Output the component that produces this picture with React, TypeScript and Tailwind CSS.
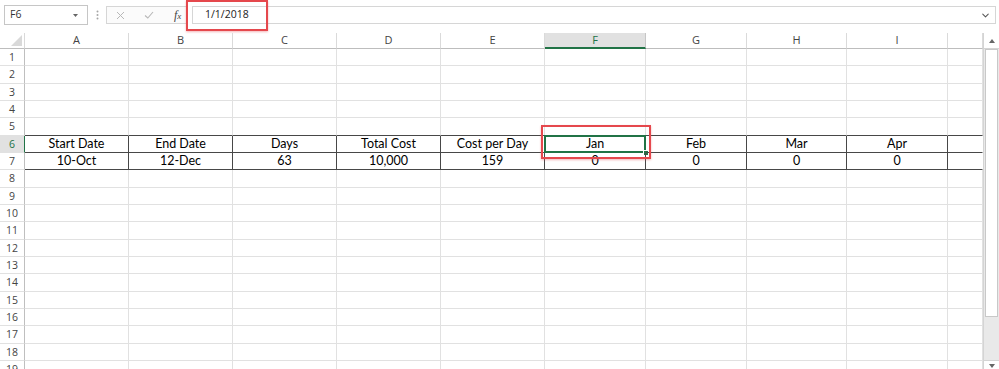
import { ChevronDown } from "lucide-react";

const letters = ["A", "B", "C", "D", "E", "F", "G", "H", "I", ""];

const header = ["Start Date", "End Date", "Days", "Total Cost", "Cost per Day", "Jan", "Feb", "Mar", "Apr", ""];
const values = ["10-Oct", "12-Dec", "63", "10,000", "159", "0", "0", "0", "0", ""];

const ui = { fontFamily: '"Open Sans", "Noto Sans", sans-serif' };
const cellFont = { fontFamily: 'Lato, "Liberation Sans", sans-serif' };

function FormulaBar() {
  return (
    <div className="relative h-[33px] flex items-start pt-[5px]" style={ui}>
      <div className="ml-[4px] w-[84px] h-[20px] border border-[#c6c6c6] bg-white flex items-center justify-between pl-[5px] pr-[9px]">
        <span className="text-[10.5px] text-[#333]">F6</span>
        <svg width="5" height="3" viewBox="0 0 5 3">
          <polygon points="0,0 5,0 2.5,3" fill="#666" />
        </svg>
      </div>
      <div className="w-[18px] h-[20px] flex items-center justify-center">
        <svg width="3" height="10" viewBox="0 0 3 10">
          <circle cx="1.5" cy="1.5" r="1" fill="#a6a6a6" />
          <circle cx="1.5" cy="5" r="1" fill="#a6a6a6" />
          <circle cx="1.5" cy="8.5" r="1" fill="#a6a6a6" />
        </svg>
      </div>
      <div className="mt-[1px] w-[82px] h-[18px] border border-[#d6d6d6] bg-[#fbfbfb] flex items-center">
        <svg className="ml-[9px]" width="9" height="9" viewBox="0 0 9 9">
          <path d="M1 1 L8 8 M8 1 L1 8" stroke="#b8b8b8" strokeWidth="1" fill="none" />
        </svg>
        <svg className="ml-[19px]" width="10" height="8" viewBox="0 0 10 8">
          <path d="M1 4.5 L3.8 7 L9 1" stroke="#b8b8b8" strokeWidth="1.1" fill="none" />
        </svg>
        <span className="ml-[20px] text-[12px] italic text-[#444]" style={{ fontFamily: '"Liberation Serif", serif' }}>
          f<span className="text-[9px]">x</span>
        </span>
      </div>
      <div className="mt-[1px] ml-[4px] mr-[3px] flex-1 h-[18px] border border-[#d6d6d6] bg-white flex items-center justify-between pl-[12px] pr-[4px]">
        <span className="text-[10.5px] text-[#222]">1/1/2018</span>
        <ChevronDown size={11} strokeWidth={2.2} color="#555" />
      </div>
      <div className="absolute left-[186px] top-0 w-[82px] h-[31px] border-2 border-[#e5484d] shadow-[0_1px_2px_rgba(229,72,77,0.4)]" />
    </div>
  );
}

function Corner() {
  return (
    <div className="h-[16px] border-r border-b border-r-[#d9d9d9] border-b-[#bdbdbd] flex items-end justify-end pr-[2px] pb-[2px]">
      <svg width="11" height="11" viewBox="0 0 11 11">
        <polygon points="11,0 11,11 0,11" fill="#d9d9d9" />
      </svg>
    </div>
  );
}

function Sheet() {
  const rows = Array.from({ length: 19 }, (_, i) => i + 1);
  return (
    <div className="relative flex-1 overflow-hidden">
      <div className="grid grid-cols-[25px_104px_104px_104px_104px_104px_101px_101px_100px_101px_1fr]">
        <Corner />
        {letters.map((l, i) =>
          l === "F" ? (
            <div
              key={i}
              className="h-[16px] bg-[#e1e1e1] border-r border-r-[#c6c6c6] border-b-2 border-b-[#217346] flex items-center justify-center text-[11px] text-[#217346]"
              style={ui}
            >
              {l}
            </div>
          ) : (
            <div
              key={i}
              className="h-[16px] border-r border-b border-r-[#dadada] border-b-[#bdbdbd] flex items-center justify-center text-[11px] text-[#444]"
              style={ui}
            >
              {l}
            </div>
          )
        )}

        {rows.map((r, ri) => {
          const h = ri % 3 === 1 ? "h-[18px]" : "h-[17px]";
          const inTable = r === 6 || r === 7;
          return [
            <div
              key={"rh" + r}
              className={
                h +
                " flex items-center justify-center pt-px text-[10.5px] border-b border-b-[#e1e1e1] border-r " +
                (r === 6 ? "bg-[#e1e1e1] text-[#217346] border-r-[#217346]" : "text-[#444] border-r-[#bfbfbf]")
              }
              style={ui}
            >
              {r}
            </div>,
            ...letters.map((_, ci) => {
              const last = ci === letters.length - 1;
              let b = "border-r border-b ";
              if (inTable) {
                b += (last ? "border-r-transparent " : "border-r-[#474747] ") + "border-b-[#474747]";
              } else if (r === 5) {
                b += "border-r-[#e1e1e1] border-b-[#474747]";
              } else {
                b += "border-r-[#e1e1e1] border-b-[#e1e1e1]";
              }
              const text = r === 6 ? header[ci] : r === 7 ? values[ci] : "";
              const selected = r === 6 && ci === 5;
              return (
                <div
                  key={r + "-" + ci}
                  className={h + " " + b + " relative flex items-center justify-center text-[12.5px] text-black"}
                  style={cellFont}
                >
                  {text}
                  {selected && (
                    <>
                      <div className="absolute -left-[1px] -top-[1px] w-[calc(100%+2px)] h-[calc(100%+2px)] border-2 border-[#217346]" />
                      <div className="absolute -right-[4px] -bottom-[4px] w-[6px] h-[6px] bg-[#217346] border border-white" />
                      <div className="absolute z-10 -left-[4px] -top-[11px] w-[110px] h-[34px] border-2 border-[#e5484d] shadow-[0_1px_2px_rgba(229,72,77,0.4)]" />
                    </>
                  )}
                </div>
              );
            }),
          ];
        })}
      </div>
    </div>
  );
}

function Scrollbar() {
  return (
    <div className="w-[16px] flex flex-col bg-[#e9e9e9] border-l border-[#d4d4d4]">
      <div className="h-[16px] bg-white border-b border-[#d4d4d4] flex items-center justify-center">
        <svg width="6" height="4" viewBox="0 0 6 4">
          <polygon points="0,4 6,4 3,0" fill="#666" />
        </svg>
      </div>
      <div className="mx-[1px] h-[268px] bg-white border border-[#c8c8c8]" />
      <div className="flex-1" />
      <div className="h-[9px] bg-white border-t border-[#d4d4d4] flex items-start justify-center pt-[3px]">
        <svg width="6" height="4" viewBox="0 0 6 4">
          <polygon points="0,0 6,0 3,4" fill="#666" />
        </svg>
      </div>
    </div>
  );
}

export default function App() {
  return (
    <div className="w-[999px] h-[369px] bg-white overflow-hidden flex flex-col">
      <FormulaBar />
      <div className="flex flex-1 min-h-0">
        <Sheet />
        <Scrollbar />
      </div>
    </div>
  );
}
